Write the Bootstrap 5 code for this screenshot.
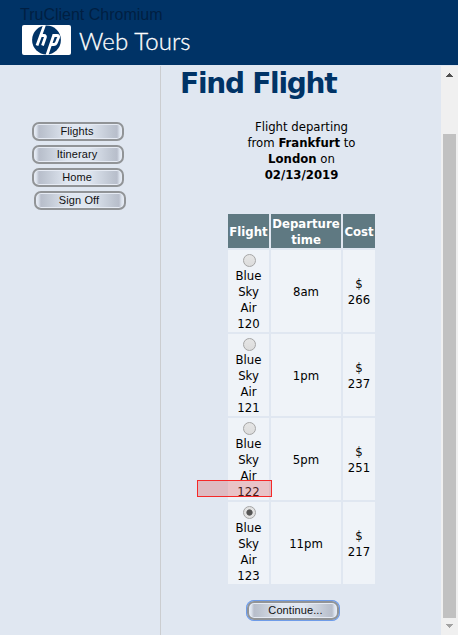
<!DOCTYPE html>
<html lang="en">
<head>
<meta charset="utf-8">
<title>Web Tours</title>
<link href="https://cdn.jsdelivr.net/npm/bootstrap@5.3.0/dist/css/bootstrap.min.css" rel="stylesheet">
<script src="https://cdn.jsdelivr.net/npm/bootstrap@5.3.0/dist/js/bootstrap.bundle.min.js"></script>
<style>
body{width:458px;height:635px;overflow:hidden;background:#e0e7f1;color:#000;font:13px/16px "DejaVu Sans Condensed","DejaVu Sans",sans-serif;font-stretch:condensed}
.top-bar{height:65px;background:#003366}
.brand{padding:25px 0 0 22px;gap:8px}
.brand svg{width:49px;height:30px;flex:none}
.brand-name{font:300 24px/30px Lato,sans-serif;-webkit-text-stroke:.3px #fff;color:#fff;padding-top:1px;letter-spacing:.1px}
.overlay-title{left:20px;top:6px;font:16px/18px "Liberation Sans",sans-serif;color:#001f42}
.side{width:161px;border-right:1px solid #cbcdd0;padding:56px 0 0 32px;gap:4px;margin-top:1px}
.tour-btn{width:92px;height:19px;border:2px solid #919497;border-radius:7px;padding:0 2px 0 0;font:11px/15px "Liberation Sans",sans-serif;letter-spacing:.1px;color:#111;background:linear-gradient(90deg,#e0e7f1 0,#e0e7f1 2px,#b8becb 5px,#bcc3cf 9px,#dfe6f0 33px,#dfe6f0 55px,#bcc3cf 79px,#b8becb 83px,#e0e7f1 86px);box-shadow:inset 0 0 0 1px #e6ebf4}
.sign-off{margin-left:2px}
.find-title{font:bold 28px/34px "DejaVu Sans",sans-serif;letter-spacing:-1.25px;color:#003366;padding:2px 0 0 19px;margin:0 0 -1px}
.results{width:151px;margin-left:65px}
.trip{margin-top:19px}
.trip div{height:16px}
.fl-table{display:grid;grid-template-columns:41px 70px 32px;gap:2px;margin:31px 0 0 2px}
.fl-table>div{display:flex;flex-direction:column;justify-content:center;align-items:center}
.hd{background:#5f7982;color:#fff;font-weight:bold;height:34px;padding-top:1px}
.fl-cell{background:#eff3f8;height:82px;padding-top:2px}
.pick{width:13px;height:13px;margin:2px 0 1px 1px;border:1px solid #a5a5a5;border-radius:50%;background:linear-gradient(#e5e5e5,#dcdcdc);appearance:none;flex:none}
.pick:checked{background:radial-gradient(circle,#555 0 2.7px,#e2e2e2 3.5px)}
.go{margin:17px 0 0 21px;padding:0 0 0 5px;outline:1px solid #6f9ce8;box-shadow:0 0 0 1px #91b7f5,inset 0 0 0 1px #e6ebf4}
.highlight{left:197px;top:480px;width:75px;height:17px;border:1px solid #f52929;background:rgba(218,85,85,.3)}
.scroller{width:17px;background:#f0f0f0;margin-top:1px}
</style>
</head>
<body class="position-relative d-flex flex-column">
<header class="top-bar flex-shrink-0">
 <div class="brand d-flex">
  <svg viewBox="0 0 49 30" aria-label="hp"><rect width="49" height="30" rx="2" fill="#fff"/><circle cx="24.500" cy="15" r="14.400" fill="#003366"/><g fill="none" stroke="#fff" stroke-width="2.800"><path d="M22.500 0 15 20.500M18 10.500h4q2 0 1.200 2.300L20.500 20.500M25 30 32 9.500M30.500 10.500h4.500q2.200 0 1.400 2.300L34.500 17.500q-.8 2-2.800 2H28"/></g></svg>
  <div class="brand-name text-nowrap">Web Tours</div>
 </div>
</header>
<div class="overlay-title position-absolute text-nowrap">TruClient Chromium</div>
<div class="d-flex flex-grow-1">
 <nav class="side d-flex flex-column flex-shrink-0">
  <button class="tour-btn">Flights</button>
  <button class="tour-btn">Itinerary</button>
  <button class="tour-btn">Home</button>
  <button class="tour-btn sign-off">Sign Off</button>
 </nav>
 <main class="flex-grow-1">
  <h1 class="find-title text-nowrap">Find Flight</h1>
  <div class="results">
   <div class="trip text-center text-nowrap"><div>Flight departing</div><div>from <b>Frankfurt</b> to</div><div><b>London</b> on</div><div><b>02/13/2019</b></div></div>
   <div class="fl-table text-center text-nowrap">
    <div class="hd">Flight</div><div class="hd"><span>Departure</span><span>time</span></div><div class="hd">Cost</div>
    <div class="fl-cell justify-content-start"><input class="pick" type="radio" name="f"><span>Blue</span><span>Sky</span><span>Air</span><span>120</span></div><div class="fl-cell">8am</div><div class="fl-cell"><span>$</span><span>266</span></div>
    <div class="fl-cell justify-content-start"><input class="pick" type="radio" name="f"><span>Blue</span><span>Sky</span><span>Air</span><span>121</span></div><div class="fl-cell">1pm</div><div class="fl-cell"><span>$</span><span>237</span></div>
    <div class="fl-cell justify-content-start"><input class="pick" type="radio" name="f"><span>Blue</span><span>Sky</span><span>Air</span><span>122</span></div><div class="fl-cell">5pm</div><div class="fl-cell"><span>$</span><span>251</span></div>
    <div class="fl-cell justify-content-start"><input class="pick" type="radio" name="f" checked><span>Blue</span><span>Sky</span><span>Air</span><span>123</span></div><div class="fl-cell">11pm</div><div class="fl-cell"><span>$</span><span>217</span></div>
   </div>
   <button class="tour-btn go d-block">Continue...</button>
  </div>
 </main>
 <div class="scroller flex-shrink-0"><svg class="d-block" width="17" height="569" shape-rendering="crispEdges"><path d="M5 11h7L8.500 7z" fill="#505050"/><path d="M2 68h13v484H2z" fill="#c1c1c1"/><path d="M5 558h7l-3.500 4z" fill="#a3a3a3"/></svg></div>
</div>
<div class="highlight position-absolute"></div>
</body>
</html>
